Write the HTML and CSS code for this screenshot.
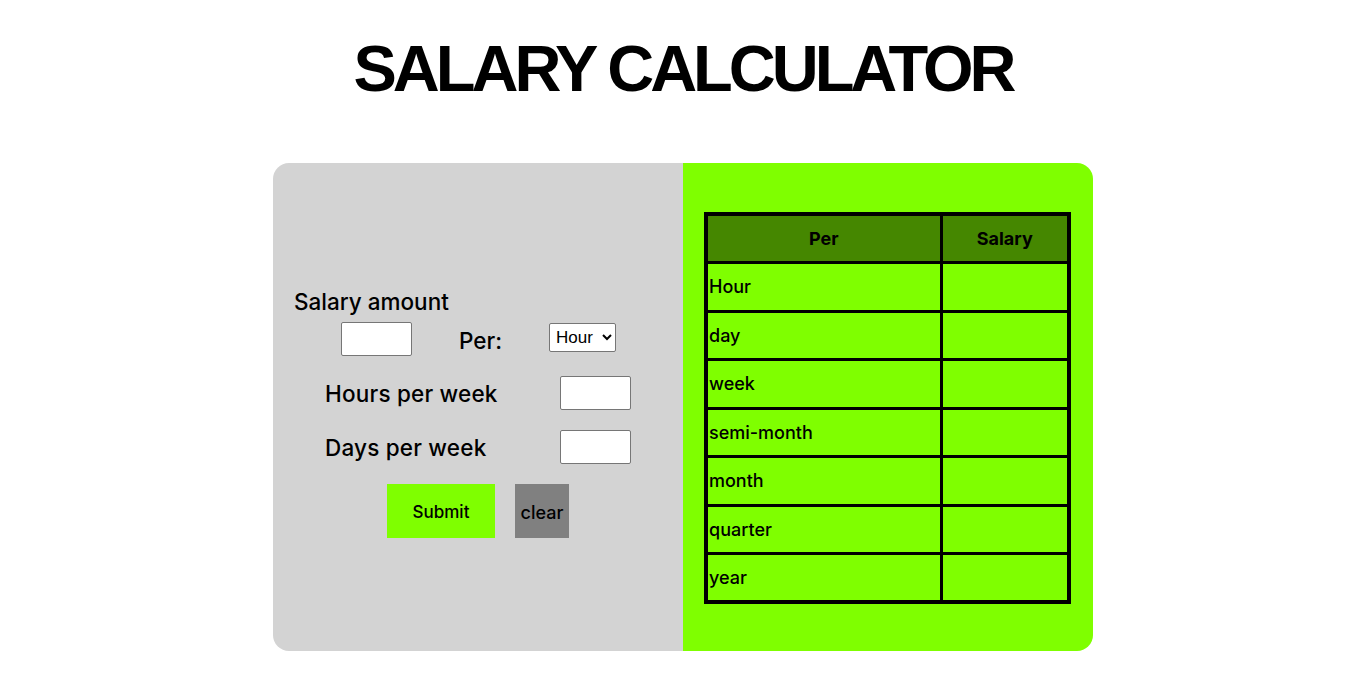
FILE: index.html
```html
<!DOCTYPE html>
<html>
<head>
<meta charset="utf-8">
<link rel="stylesheet" href="styles.css">
</head>
<body>
<h1 class="title">SALARY CALCULATOR</h1>
<div class="card">
  <div class="form-panel">
    <div class="label-amount">Salary amount</div>
    <div class="row row-amount">
      <input class="box box-amount" type="text">
      <span class="label-per">Per:</span>
      <select class="sel">
        <option>Hour</option>
      </select>
    </div>
    <div class="row row-field">
      <span class="label-field">Hours per week</span>
      <input class="box" type="text">
    </div>
    <div class="row row-field">
      <span class="label-field">Days per week</span>
      <input class="box" type="text">
    </div>
    <div class="row row-buttons">
      <button class="btn btn-submit">Submit</button>
      <button class="btn btn-clear">clear</button>
    </div>
  </div>
  <div class="table-panel">
    <table class="result">
      <thead>
        <tr><th class="col-per">Per</th><th class="col-sal">Salary</th></tr>
      </thead>
      <tbody>
        <tr><td>Hour</td><td></td></tr>
        <tr><td>day</td><td></td></tr>
        <tr><td>week</td><td></td></tr>
        <tr><td>semi-month</td><td></td></tr>
        <tr><td>month</td><td></td></tr>
        <tr><td>quarter</td><td></td></tr>
        <tr><td>year</td><td></td></tr>
      </tbody>
    </table>
  </div>
</div>
</body>
</html>
```
FILE: styles.css
```css
* { box-sizing: border-box; }
body {
  margin: 0;
  background: #ffffff;
  font-family: Inter, "Liberation Sans", sans-serif;
  color: #000;
}
.title {
  margin: 0;
  padding-top: 34px;
  height: 163px;
  text-align: center;
  font-family: "Liberation Sans", Arial, sans-serif;
  font-weight: 700;
  font-size: 65px;
  letter-spacing: -4px;
  line-height: 70px;
}
.card {
  width: 820px;
  height: 488px;
  margin: 0 auto;
  display: flex;
  border-radius: 16px;
  overflow: hidden;
}
.form-panel {
  width: 410px;
  background: #d3d3d3;
  padding: 126px 0 0 21px;
}
.label-amount {
  font-size: 22.5px;
  font-weight: 500;
  line-height: 26px;
  letter-spacing: 0;
}
.row { display: flex; align-items: center; }
.row-amount { margin-top: 7px; height: 34px; }
.box {
  width: 71px;
  height: 34px;
  border: 1px solid #767676;
  border-radius: 2px;
  background: #fff;
}
.box-amount { margin-left: 47px; }
.label-per {
  font-size: 22.5px;
  font-weight: 500;
  margin-left: 47px;
  margin-top: 2px;
  width: 90px;
}
.sel {
  height: 29px;
  width: 67px;
  margin-top: -4px;
  font-family: "Liberation Sans", Arial, sans-serif;
  font-size: 17px;
  border: 1px solid #767676;
  border-radius: 2px;
  background: #fff;
  color: #000;
  padding: 0 0 0 2px;
}
.row-field {
  margin-left: 31px;
  justify-content: space-between;
  width: 306px;
  height: 34px;
}
.row-amount + .row-field { margin-top: 20px; }
.row-field + .row-field { margin-top: 20px; }
.label-field { font-size: 22.5px; font-weight: 500; letter-spacing: 0.2px; }
.row-buttons {
  margin-top: 20px;
  margin-left: 93px;
  gap: 20px;
}
.btn {
  height: 54px;
  border: none;
  font-family: Inter, "Liberation Sans", sans-serif;
  font-weight: 500;
  font-size: 17px;
  color: #000;
  padding: 2px 0 0 0;
}
.btn-submit { width: 108px; background: #7fff00; }
.btn-clear { width: 54px; background: #808080; font-size: 18px; }
.table-panel {
  width: 410px;
  background: #7fff00;
  padding: 49px 0 0 21px;
}
.result {
  border-collapse: collapse;
  border: 4px solid #000;
  width: 367px;
}
.result th, .result td {
  border: 3px solid #000;
  height: 48.5px;
  font-size: 18px;
  font-weight: 500;
  padding: 0 0 0 1px;
}
.result th {
  background: #458700;
  font-weight: 700;
  text-align: center;
  padding: 0;
}
.col-per { width: 235px; }
.result td { text-align: left; }
```
